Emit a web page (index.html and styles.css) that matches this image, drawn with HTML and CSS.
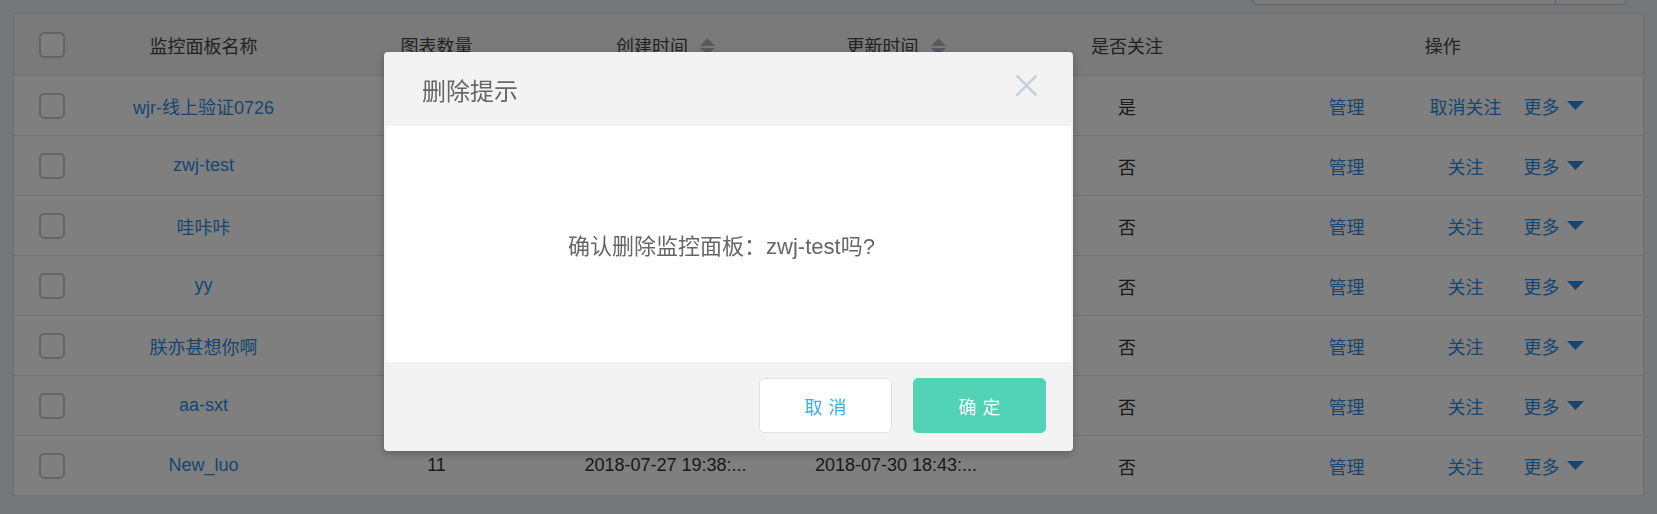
FILE: index.html
```html
<!DOCTYPE html>
<html lang="zh-CN">
<head>
<meta charset="utf-8">
<title>监控面板</title>
<link rel="stylesheet" href="styles.css">
</head>
<body>
<div class="page">
  <div class="topbar">
    <div class="search">
      <div class="search-input"></div>
      <div class="search-btn"></div>
    </div>
  </div>
  <table class="grid">
    <colgroup>
      <col class="c-check"><col class="c-name"><col class="c-count"><col class="c-created"><col class="c-updated"><col class="c-follow"><col>
    </colgroup>
    <thead>
      <tr>
        <th><span class="cb"></span></th>
        <th>监控面板名称</th>
        <th>图表数量</th>
        <th>创建时间<svg class="sort" viewBox="0 0 15 17" width="15" height="17"><polygon points="7.5,0 15,8 0,8"/><polygon points="0,10 15,10 7.5,17"/></svg></th>
        <th>更新时间<svg class="sort" viewBox="0 0 15 17" width="15" height="17"><polygon points="7.5,0 15,8 0,8"/><polygon points="0,10 15,10 7.5,17"/></svg></th>
        <th>是否关注</th>
        <th class="th-ops">操作</th>
      </tr>
    </thead>
    <tbody>
      <tr>
        <td><span class="cb"></span></td>
        <td><a class="link">wjr-线上验证0726</a></td>
        <td>8</td>
        <td>2018-07-26 10:12:...</td>
        <td>2018-07-31 11:05:...</td>
        <td>是</td>
        <td><div class="ops"><a class="link op-manage">管理</a><a class="link op-follow">取消关注</a><a class="link op-more">更多<svg class="caret" viewBox="0 0 17 9" width="17" height="9"><polygon points="0,0 17,0 8.5,9"/></svg></a></div></td>
      </tr>
      <tr>
        <td><span class="cb"></span></td>
        <td><a class="link">zwj-test</a></td>
        <td>3</td>
        <td>2018-07-27 14:20:...</td>
        <td>2018-07-30 19:02:...</td>
        <td>否</td>
        <td><div class="ops"><a class="link op-manage">管理</a><a class="link op-follow">关注</a><a class="link op-more">更多<svg class="caret" viewBox="0 0 17 9" width="17" height="9"><polygon points="0,0 17,0 8.5,9"/></svg></a></div></td>
      </tr>
      <tr>
        <td><span class="cb"></span></td>
        <td><a class="link">哇咔咔</a></td>
        <td>5</td>
        <td>2018-07-27 16:41:...</td>
        <td>2018-07-30 18:57:...</td>
        <td>否</td>
        <td><div class="ops"><a class="link op-manage">管理</a><a class="link op-follow">关注</a><a class="link op-more">更多<svg class="caret" viewBox="0 0 17 9" width="17" height="9"><polygon points="0,0 17,0 8.5,9"/></svg></a></div></td>
      </tr>
      <tr>
        <td><span class="cb"></span></td>
        <td><a class="link">yy</a></td>
        <td>2</td>
        <td>2018-07-27 17:03:...</td>
        <td>2018-07-30 18:50:...</td>
        <td>否</td>
        <td><div class="ops"><a class="link op-manage">管理</a><a class="link op-follow">关注</a><a class="link op-more">更多<svg class="caret" viewBox="0 0 17 9" width="17" height="9"><polygon points="0,0 17,0 8.5,9"/></svg></a></div></td>
      </tr>
      <tr>
        <td><span class="cb"></span></td>
        <td><a class="link">朕亦甚想你啊</a></td>
        <td>6</td>
        <td>2018-07-27 18:22:...</td>
        <td>2018-07-30 18:47:...</td>
        <td>否</td>
        <td><div class="ops"><a class="link op-manage">管理</a><a class="link op-follow">关注</a><a class="link op-more">更多<svg class="caret" viewBox="0 0 17 9" width="17" height="9"><polygon points="0,0 17,0 8.5,9"/></svg></a></div></td>
      </tr>
      <tr>
        <td><span class="cb"></span></td>
        <td><a class="link">aa-sxt</a></td>
        <td>4</td>
        <td>2018-07-27 19:10:...</td>
        <td>2018-07-30 18:45:...</td>
        <td>否</td>
        <td><div class="ops"><a class="link op-manage">管理</a><a class="link op-follow">关注</a><a class="link op-more">更多<svg class="caret" viewBox="0 0 17 9" width="17" height="9"><polygon points="0,0 17,0 8.5,9"/></svg></a></div></td>
      </tr>
      <tr>
        <td><span class="cb"></span></td>
        <td><a class="link">New_luo</a></td>
        <td>11</td>
        <td>2018-07-27 19:38:...</td>
        <td>2018-07-30 18:43:...</td>
        <td>否</td>
        <td><div class="ops"><a class="link op-manage">管理</a><a class="link op-follow">关注</a><a class="link op-more">更多<svg class="caret" viewBox="0 0 17 9" width="17" height="9"><polygon points="0,0 17,0 8.5,9"/></svg></a></div></td>
      </tr>
    </tbody>
  </table>
</div>

<div class="mask"></div>

<div class="modal" role="dialog">
  <div class="modal-head">
    <span class="modal-title">删除提示</span>
    <svg class="modal-close" viewBox="0 0 23 23" width="23" height="23"><path d="M1.5 1.5 L21.5 21.5 M21.5 1.5 L1.5 21.5"/></svg>
  </div>
  <div class="modal-body">确认删除监控面板：zwj-test吗?</div>
  <div class="modal-foot">
    <button class="btn btn-cancel"><span>取消</span></button>
    <button class="btn btn-ok"><span>确定</span></button>
  </div>
</div>
</body>
</html>
```

FILE: styles.css
```css
html, body {
  margin: 0;
  padding: 0;
}
body {
  background: #eceff1;
  font-family: "Liberation Sans", "Noto Sans CJK SC", sans-serif;
  color: #333;
  overflow: hidden;
}
.page {
  width: 1657px;
  height: 514px;
}
.topbar {
  height: 13px;
  overflow: hidden;
  display: flex;
  justify-content: flex-end;
  align-items: flex-end;
  padding-right: 30px;
  box-sizing: border-box;
}
.search {
  display: flex;
  height: 40px;
  margin-bottom: 8px;
  flex: 0 0 auto;
}
.search-input {
  width: 302px;
  border: 1px solid #bcc3cb;
  border-radius: 0 0 0 5px;
  background: #f7f7f7;
}
.search-btn {
  width: 70px;
  border: 1px solid #bcc3cb;
  border-left: none;
  border-radius: 0 0 5px 0;
  background: #f7f7f7;
}
.grid {
  width: 1631px;
  margin: 0 13px;
  border-collapse: collapse;
  table-layout: fixed;
  background: #fff;
  border-left: 1px solid #d4dade;
  border-right: 1px solid #d4dade;
  border-top: 1px solid #d8dde2;
}
.c-check { width: 76px; }
.c-name { width: 228px; }
.c-count { width: 238px; }
.c-created { width: 220px; }
.c-updated { width: 241px; }
.c-follow { width: 221px; }
.grid th {
  height: 61px;
  padding: 0;
  background: #f5f5f5;
  font-weight: normal;
  font-size: 18px;
  color: #444;
  text-align: center;
  border-bottom: 1px solid #dfe3e6;
  white-space: nowrap;
}
.grid th.th-ops {
  padding-left: 5px;
}
.grid td {
  height: 59px;
  padding: 0;
  font-size: 18px;
  color: #333;
  text-align: center;
  border-bottom: 1px solid #dfe3e6;
  white-space: nowrap;
  overflow: hidden;
}
.cb {
  display: inline-block;
  width: 26px;
  height: 26px;
  box-sizing: border-box;
  border: 2px solid #c3cad5;
  border-radius: 5px;
  background: #fff;
  vertical-align: middle;
}
.sort {
  fill: #aab4c2;
  margin-left: 12px;
  vertical-align: -2px;
}
.link {
  color: #2c8de0;
  text-decoration: none;
}
.ops {
  display: flex;
  align-items: center;
  padding-left: 64px;
}
.op-manage {
  width: 90px;
  text-align: center;
}
.op-follow {
  width: 90px;
  margin-left: 29px;
  text-align: center;
}
.op-more {
  margin-left: 13px;
  display: flex;
  align-items: center;
}
.caret {
  fill: #2c8de0;
  margin-left: 7px;
}
.mask {
  position: fixed;
  inset: 0;
  background: rgba(0, 0, 0, 0.5);
}
.modal {
  position: fixed;
  left: 384px;
  top: 52px;
  width: 689px;
  box-sizing: border-box;
  padding: 0 2px 2px;
  background: #f3f3f3;
  border-radius: 4px;
  box-shadow: 0 3px 10px rgba(0, 0, 0, 0.25);
  font-family: "Liberation Sans", "Noto Sans CJK SC", sans-serif;
}
.modal-head {
  height: 74px;
  display: flex;
  align-items: center;
  justify-content: space-between;
  padding: 0 33px 0 36px;
}
.modal-title {
  font-size: 24px;
  color: #666;
}
.modal-close {
  fill: none;
  stroke: #c6d1dd;
  stroke-width: 2.6;
  margin-bottom: 8px;
}
.modal-body {
  height: 236px;
  box-sizing: border-box;
  padding-right: 14px;
  background: #fff;
  display: flex;
  align-items: center;
  justify-content: center;
  font-size: 22px;
  color: #666;
}
.modal-foot {
  height: 87px;
  display: flex;
  align-items: center;
  justify-content: flex-end;
  gap: 21px;
  padding-right: 25px;
}
.btn {
  width: 133px;
  height: 55px;
  border-radius: 5px;
  font-family: inherit;
  font-size: 18px;
  letter-spacing: 0.34em;
  cursor: pointer;
}
.btn span {
  margin-right: -0.34em;
}
.btn-cancel {
  background: #fff;
  border: 1px solid #e2e2e2;
  color: #36aef2;
}
.btn-ok {
  background: #52d3b5;
  border: 1px solid #52d3b5;
  color: #fff;
}
```
